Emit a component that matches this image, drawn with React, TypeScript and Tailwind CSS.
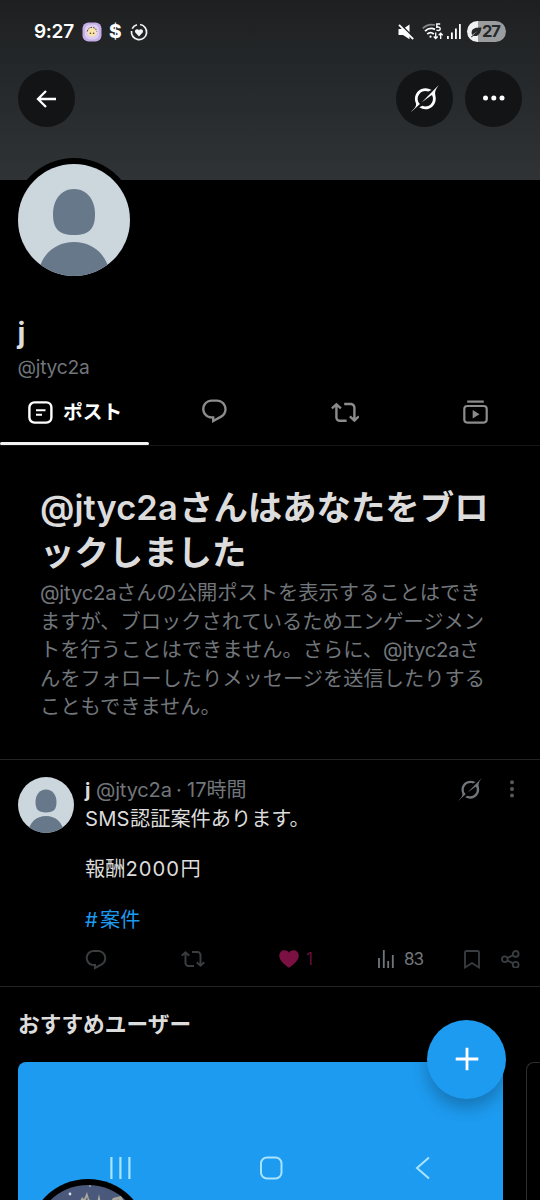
import type { ReactNode } from 'react';

const latin = "font-['Inter','Noto_Sans_CJK_JP',sans-serif]";

function GrokIcon({ className }: { className: string }) {
  return (
    <svg viewBox="0 0 33 32" className={className} fill="currentColor">
      <path d="M12.745 20.54l10.97-8.19c.539-.4 1.307-.244 1.564.38 1.349 3.288.746 7.241-1.938 9.955-2.683 2.714-6.417 3.31-9.83 1.954l-3.728 1.745c5.347 3.697 11.84 2.782 15.898-1.324 3.219-3.255 4.216-7.692 3.284-11.693l.008.009c-1.351-5.878.332-8.227 3.782-13.031L33 0l-4.54 4.59v-.014L12.743 20.544m-2.263 1.987c-3.837-3.707-3.175-9.446.1-12.755 2.42-2.449 6.388-3.448 9.852-1.979l3.72-1.737c-.67-.49-1.53-1.017-2.515-1.387-4.455-1.854-9.789-.931-13.41 2.728-3.483 3.523-4.579 8.94-2.697 13.561 1.405 3.454-.899 5.898-3.22 8.364C1.49 30.2.666 31.074 0 32l10.478-9.466" />
    </svg>
  );
}

function ReplyIcon({ className }: { className: string }) {
  return (
    <svg viewBox="0 0 24 24" className={className} fill="currentColor">
      <path d="M1.751 10c0-4.42 3.584-8 8.005-8h4.366c4.49 0 8.129 3.64 8.129 8.13 0 2.96-1.607 5.68-4.196 7.11l-8.054 4.46v-3.69h-.067c-4.49.1-8.183-3.51-8.183-8.01zm8.005-6c-3.317 0-6.005 2.69-6.005 6 0 3.37 2.77 6.08 6.138 6.01l.351-.01h1.761v2.3l5.087-2.81c1.951-1.08 3.163-3.13 3.163-5.36 0-3.39-2.744-6.13-6.129-6.13H9.756z" />
    </svg>
  );
}

function RepostIcon({ className }: { className: string }) {
  return (
    <svg viewBox="0 0 24 24" className={className} fill="currentColor">
      <path d="M4.5 3.88l4.432 4.14-1.364 1.46L5.5 7.55V16c0 1.1.896 2 2 2H13v2H7.5c-2.209 0-4-1.79-4-4V7.55L1.432 9.48.068 8.02 4.5 3.88zM16.5 6H11V4h5.5c2.209 0 4 1.79 4 4v8.45l2.068-1.93 1.364 1.46-4.432 4.14-4.432-4.14 1.364-1.46 2.068 1.93V8c0-1.1-.896-2-2-2z" />
    </svg>
  );
}

function DefaultAvatar({ className }: { className: string }) {
  return (
    <svg viewBox="0 0 112 112" className={`rounded-full ${className}`}>
      <rect width="112" height="112" fill="#ccd6dd" />
      <path d="M56 25C43 25 35 36 35 50C35 64 40 71 56 71C72 71 77 64 77 50C77 36 69 25 56 25Z" fill="#66788a" />
      <path d="M20 112C22 91 37 78 56 78C75 78 90 91 92 112Z" fill="#66788a" />
    </svg>
  );
}

function StatusBar() {
  return (
    <div className="flex h-[63px] items-center pl-[34px] text-white">
      <span className="w-[48px] pt-[2px] text-[19px] font-semibold tracking-[-0.3px]">9:27</span>
      <svg viewBox="0 0 20 20" className="size-5">
        <rect x="0.5" y="0.5" width="19" height="19" rx="6" fill="#c5aee6" />
        <rect x="3" y="2.5" width="14" height="15" rx="5" fill="#dccdf2" />
        <circle cx="10" cy="10" r="4.8" fill="#f8e3ae" />
        <path d="M5.3 9.5C6 4 14 4 14.7 9.5" fill="none" stroke="#57483b" strokeWidth="1" strokeDasharray="1.6 1" />
        <circle cx="8.4" cy="11.3" r="0.8" fill="#4b3d35" />
        <circle cx="11.6" cy="11.3" r="0.8" fill="#4b3d35" />
      </svg>
      <span className="ml-[7px] w-[14px] pt-[2px] text-[19px] font-extrabold">$</span>
      <svg viewBox="0 0 18 18" className="ml-[7px] size-[18px]" fill="none" stroke="#f2f2f2" strokeWidth="1.7">
        <path d="M10 1.5A7.6 7.6 0 1 1 1.5 8M2.2 5.7A7.6 7.6 0 0 1 7 1.7" />
        <path d="M9 13.4L5.3 9.6C3.9 7.2 7 4.9 9 7C11 4.9 14.1 7.2 12.7 9.6Z" fill="#f2f2f2" stroke="none" />
      </svg>
      <svg viewBox="0 0 16 16" className="ml-[250px] size-4">
        <path d="M0.5 5H5L11.5 0.5V15.2L5 11H0.5Z" fill="#fff" />
        <path d="M2.2 0.1L16 13.9" stroke="#222527" strokeWidth="1.6" />
        <path d="M1 0.9L15.2 15.1" stroke="#fff" strokeWidth="1.9" />
      </svg>
      <svg viewBox="0 0 22 17" className="ml-[8px] h-[17px] w-[22px]" fill="none" stroke="#fff" strokeWidth="1.8">
        <path d="M0.8 5.3Q6 0.2 13 2" stroke="#85888a" />
        <path d="M3 8.2Q7.5 3.8 13 6.4M5.3 11Q8.5 8.2 11.8 11" />
        <circle cx="8.5" cy="13.7" r="1.1" fill="#fff" stroke="none" />
        <path d="M18.2 1H14.8V4.2Q18.4 3.5 18.2 6Q17.8 8.2 14.4 7.2" strokeWidth="1.4" />
        <path d="M13.7 9.5V15.5M11.7 13.5L13.7 15.5L15.7 13.5M18.7 16V10.2M16.7 12.2L18.7 10.2L20.7 12.2" strokeWidth="1.3" />
      </svg>
      <svg viewBox="0 0 14 15" className="ml-[3px] h-[15px] w-[14px]" fill="#fff">
        <rect x="0" y="12" width="1.8" height="3" />
        <rect x="4" y="8.5" width="1.8" height="6.5" />
        <rect x="8" y="4.5" width="1.8" height="10.5" />
        <rect x="12" y="0" width="1.8" height="15" />
      </svg>
      <div className="ml-[6px] flex h-[21px] w-[39px] items-center overflow-hidden rounded-full bg-[linear-gradient(90deg,#f1f1f1_28%,#9a9c9d_28%)] pl-[4px] text-[#25282a]">
        <svg viewBox="0 0 11 12" className="h-3 w-[11px] shrink-0" fill="currentColor">
          <path d="M1 9C-1 2 5 1.5 10.5 1.5C9.5 8 7 11 2.3 9.8L0.7 11.5L0 10.8L6.5 5Z" />
        </svg>
        <span className="text-[16.5px] leading-none font-bold tracking-[-1.2px]">27</span>
      </div>
    </div>
  );
}

function RoundButton({ children, className = '' }: { children: ReactNode; className?: string }) {
  return (
    <button className={`flex size-[57px] items-center justify-center rounded-full bg-[#121416] text-white ${className}`}>
      {children}
    </button>
  );
}

function Tabs() {
  return (
    <nav className="flex h-[64px] border-b border-[#141516] text-[#8c8c8c]">
      <div className="flex w-[149px] shrink-0 flex-col text-white">
        <div className="flex h-[60px] items-center pl-[28px]">
          <svg viewBox="0 0 25 23" className="h-[23px] w-[25px]" fill="none" stroke="currentColor" strokeWidth="2.4">
            <rect x="1.4" y="1.4" width="22" height="20.2" rx="5" />
            <path d="M8 9.2H17.5M8 13.8H14" strokeWidth="2.1" />
          </svg>
          <span className="ml-[10px] text-[19.8px] leading-[28px] font-bold">ポスト</span>
        </div>
        <div className="h-[3px] rounded-full bg-[#f2f2f2]" />
      </div>
      <div className="flex h-[59px] w-[131px] shrink-0 items-center justify-center">
        <ReplyIcon className="size-[28.8px]" />
      </div>
      <div className="flex h-[60px] w-[130px] shrink-0 items-center justify-center">
        <RepostIcon className="size-[28.8px]" />
      </div>
      <div className="flex h-[60px] w-[130px] shrink-0 items-center justify-center">
        <svg viewBox="0 0 25 24" className="h-6 w-[25px]" fill="none" stroke="currentColor" strokeWidth="2.2">
          <path d="M4.2 1.6H20.8" />
          <rect x="1.3" y="6" width="22.4" height="16.6" rx="3" />
          <path d="M9.7 10V18.5L16.5 14.2Z" fill="currentColor" stroke="none" />
        </svg>
      </div>
    </nav>
  );
}

function BlockNotice() {
  return (
    <section className="h-[314px] border-b border-[#222426] pt-[39px] pl-[40px] whitespace-nowrap">
      <h2 className="text-[34.4px] leading-[45px] font-bold text-[#dcdcdc]">
        <div>
          <span className="inline-block w-[139px] font-semibold tracking-[0.1px]">@jtyc2a</span>さんはあなたをブロ
        </div>
        <div>ックしました</div>
      </h2>
      <div className="pt-[4px] text-[20.25px] leading-[28.5px] text-[#71767b]">
        <div>
          <span className="inline-block w-[76px] tracking-[-0.2px]">@jtyc2a</span>さんの公開ポストを表示することはでき
        </div>
        <div>ますが、ブロックされているためエンゲージメン</div>
        <div>
          トを行うことはできません。さらに、<span className="inline-block w-[76px] tracking-[-0.2px]">@jtyc2a</span>さ
        </div>
        <div>んをフォローしたりメッセージを送信したりする</div>
        <div>こともできません。</div>
      </div>
    </section>
  );
}

function Post() {
  return (
    <article className="flex h-[227px] border-b border-[#222426] pt-[17px] pl-[18px]">
      <DefaultAvatar className="size-14" />
      <div className="ml-[11px] flex-1 text-[20px] text-[#dcdcdc]">
        <div className="flex h-[26px] items-center whitespace-nowrap text-[#71767b]">
          <span className="w-[11px] font-bold text-[#dcdcdc]">j</span>
          <span className="w-[80px] tracking-[-0.15px]">@jtyc2a</span>
          <span className="w-[11px]">·</span>
          <span className="w-[271px]">17時間</span>
          <GrokIcon className="mb-[2px] h-[23px] w-6" />
          <svg viewBox="0 0 4 18" className="mb-[2px] ml-[27.5px] h-[18px] w-1" fill="#55585b">
            <circle cx="2" cy="2.2" r="2" />
            <circle cx="2" cy="9" r="2" />
            <circle cx="2" cy="15.6" r="2" />
          </svg>
        </div>
        <div className="h-[129px] pt-[2.6px] text-[20.2px] leading-[25.4px]">
          <p><span className="inline-block w-[45px] tracking-[0.2px]">SMS</span>認証案件あります。</p>
          <p className="mt-[25.4px]">報酬<span className="inline-block w-[55px] tracking-[1px]">2000</span>円</p>
          <p className="mt-[25.4px] text-[#1d9bf0]"><span className="inline-block w-[15px]">#</span>案件</p>
        </div>
        <div className="flex h-[54px] items-center text-[17px] text-[#3a3d40]">
          <ReplyIcon className="mt-px ml-[-1px] size-[24px]" />
          <RepostIcon className="ml-[73px] size-[24px]" />
          <svg viewBox="0 0 20 18" className="ml-[74px] h-[18px] w-5" fill="#7a1142">
            <path d="M10 17.8C4 14 0.3 10 0.3 5.6C0.3 0.2 7 -1.6 10 2.7C13 -1.6 19.7 0.2 19.7 5.6C19.7 10 16 14 10 17.8Z" />
          </svg>
          <span className="ml-[6px] w-[73px] pt-px pl-px text-[#62103a]">1</span>
          <svg viewBox="0 0 16 18" className="h-[18px] w-4 text-[#71767b]" stroke="currentColor" strokeWidth="1.8">
            <path d="M1 8V18M5.8 0V18M10.2 11V18M14.8 5V18" />
          </svg>
          <span className="ml-[10px] w-[60px] pt-[2px] tracking-[-0.9px] text-[#71767b]">83</span>
          <svg viewBox="0 0 16 19" className="h-[19px] w-4" fill="none" stroke="currentColor" strokeWidth="1.8">
            <path d="M1 2.5Q1 1 2.5 1H13.5Q15 1 15 2.5V17.5L8 13L1 17.5Z" />
          </svg>
          <svg viewBox="0 0 18 18" className="ml-[21px] size-[18.5px]" fill="none" stroke="currentColor" strokeWidth="1.8">
            <circle cx="3.7" cy="9" r="2.8" />
            <circle cx="14.3" cy="3.8" r="2.8" />
            <circle cx="14.3" cy="14.3" r="2.8" />
            <path d="M6.2 7.8L11.8 5M6.2 10.2L11.8 13" />
          </svg>
        </div>
      </div>
    </article>
  );
}

function Suggestions() {
  return (
    <section className="h-[213px] pl-[18px]">
      <h3 className="h-[75px] pt-[21px] text-[21.7px] leading-[32px] font-bold text-[#dcdcdc]">おすすめユーザー</h3>
      <div className="flex h-[139px]">
        <div className="relative w-[485px] shrink-0 overflow-hidden rounded-t-lg bg-[#1d9bf0]">
          <svg viewBox="0 0 120 120" className="absolute top-[117px] left-[10px] size-[120px]">
            <circle cx="60" cy="60" r="60" fill="#000" />
            <clipPath id="portrait"><circle cx="60" cy="60" r="54" /></clipPath>
            <g clipPath="url(#portrait)">
              <rect width="120" height="120" fill="#4a587b" />
              <circle cx="42" cy="15" r="1.4" fill="#d9e0e5" />
              <circle cx="62" cy="7" r="0.8" fill="#d9e0e5" />
              <path d="M51 24L54 18L56 20L59 13L61 20L65 24ZM69 24L71 15L73 24ZM82 24L85 19L93 17L97 24Z" fill="#aaa79d" />
              <path d="M56 24L59 18L61 24ZM87 24L90 20L93 24Z" fill="#666978" />
            </g>
          </svg>
        </div>
        <div className="ml-[23px] w-[40px] shrink-0 rounded-tl-lg border-t border-l border-[#2a2c2e]" />
      </div>
    </section>
  );
}

function SystemNav() {
  return (
    <svg viewBox="0 0 320 24" className="absolute top-[1156px] left-[110px] h-6 w-[320px]" fill="none" stroke="#a9e4ff" strokeWidth="2">
      <path d="M1.4 1V23M10.4 1V23M19.4 1V23" strokeWidth="2.2" />
      <rect x="151" y="1.5" width="20.5" height="21" rx="6" />
      <path d="M319 1.5L307 12L319 22.5" />
    </svg>
  );
}

export default function App() {
  return (
    <div className={`relative h-[1200px] w-[540px] overflow-hidden bg-black ${latin}`}>
      <header className="h-[180px] bg-[linear-gradient(#1e1f20,#232628_30%,#303335)]">
        <StatusBar />
        <div className="flex pt-[7px] pl-[18px]">
          <RoundButton>
            <svg viewBox="0 0 20 18" className="mr-[2px] h-[18px] w-5" fill="none" stroke="currentColor" strokeWidth="2.3">
              <path d="M20 9H2M10 1L2 9L10 17" />
            </svg>
          </RoundButton>
          <RoundButton className="ml-[321px]"><GrokIcon className="mb-px h-[27px] w-7" /></RoundButton>
          <RoundButton className="ml-[12px]">
            <svg viewBox="0 0 22 6" className="mb-px h-[6px] w-[22px]" fill="currentColor">
              <circle cx="2.5" cy="3" r="2.5" />
              <circle cx="10.8" cy="3" r="2.5" />
              <circle cx="19" cy="3" r="2.5" />
            </svg>
          </RoundButton>
        </div>
      </header>
      <section className="h-[202px] pl-[12.4px]">
        <div className="relative top-[-22px] size-[124px] rounded-full bg-black p-[6px]">
          <DefaultAvatar className="size-[112px]" />
        </div>
        <div className="pl-[5px]">
          <h1 className="h-[45px] pt-[6px] text-[29px] leading-[45px] font-bold text-[#dcdcdc]">j</h1>
          <p className="pt-[6px] text-[19.2px] leading-[24px] tracking-[-0.2px] text-[#71767b]">@jtyc2a</p>
        </div>
      </section>
      <Tabs />
      <BlockNotice />
      <Post />
      <Suggestions />
      <button className="absolute top-[1020px] left-[427px] flex size-[79px] items-center justify-center rounded-full bg-[#1d9bf0] shadow-[0_9px_16px_rgba(0,0,0,0.24)]">
        <svg viewBox="0 0 24 24" className="mb-px size-6" stroke="#fff" strokeWidth="2.8">
          <path d="M0.7 12H23.3M12 0.7V23.3" />
        </svg>
      </button>
      <SystemNav />
    </div>
  );
}
